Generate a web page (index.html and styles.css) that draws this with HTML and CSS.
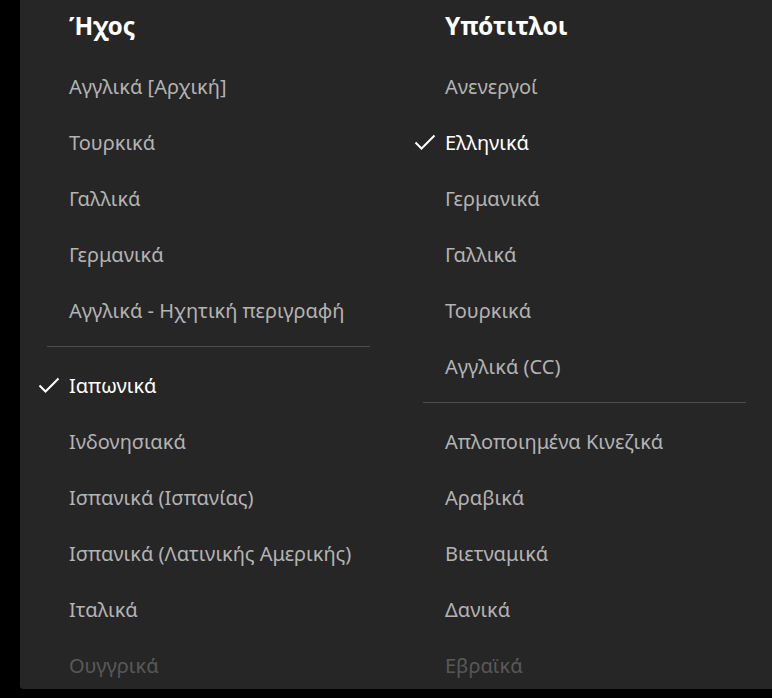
FILE: index.html
```html
<!DOCTYPE html>
<html lang="el">
<head>
<meta charset="utf-8">
<link rel="stylesheet" href="styles.css">
</head>
<body>
<div class="panel">
  <div class="column">
    <h2 class="heading">Ήχος</h2>
    <ul class="list">
      <li class="item">Αγγλικά [Αρχική]</li>
      <li class="item">Τουρκικά</li>
      <li class="item">Γαλλικά</li>
      <li class="item">Γερμανικά</li>
      <li class="item">Αγγλικά - Ηχητική περιγραφή</li>
    </ul>
    <hr class="divider">
    <ul class="list">
      <li class="item selected"><svg class="check" viewBox="0 0 22 16"><polyline points="1.5,8.5 7.5,14.5 20.5,1.5"/></svg>Ιαπωνικά</li>
      <li class="item">Ινδονησιακά</li>
      <li class="item">Ισπανικά (Ισπανίας)</li>
      <li class="item">Ισπανικά (Λατινικής Αμερικής)</li>
      <li class="item">Ιταλικά</li>
      <li class="item">Ουγγρικά</li>
    </ul>
  </div>
  <div class="column">
    <h2 class="heading">Υπότιτλοι</h2>
    <ul class="list">
      <li class="item">Ανενεργοί</li>
      <li class="item selected"><svg class="check" viewBox="0 0 22 16"><polyline points="1.5,8.5 7.5,14.5 20.5,1.5"/></svg>Ελληνικά</li>
      <li class="item">Γερμανικά</li>
      <li class="item">Γαλλικά</li>
      <li class="item">Τουρκικά</li>
      <li class="item">Αγγλικά (CC)</li>
    </ul>
    <hr class="divider">
    <ul class="list">
      <li class="item">Απλοποιημένα Κινεζικά</li>
      <li class="item">Αραβικά</li>
      <li class="item">Βιετναμικά</li>
      <li class="item">Δανικά</li>
      <li class="item">Εβραϊκά</li>
    </ul>
  </div>
  <div class="fade"></div>
</div>
</body>
</html>
```

FILE: styles.css
```css
html, body {
  margin: 0;
  padding: 0;
  background: #000;
  overflow: hidden;
}
body {
  font-family: "Noto Sans", "Open Sans", sans-serif;
  -webkit-font-smoothing: antialiased;
}
.panel {
  position: relative;
  margin-left: 20px;
  height: 689px;
  background: #262626;
  border-bottom-left-radius: 4px;
  overflow: hidden;
  display: flex;
  gap: 53px;
  padding-left: 27px;
}
.column {
  width: 323px;
  flex: none;
}
.heading {
  margin: 0 0 8px;
  height: 50px;
  line-height: 51px;
  padding-left: 22px;
  font-size: 24.5px;
  font-weight: 700;
  color: #fff;
  letter-spacing: -0.1px;
}
.list {
  list-style: none;
  margin: 0;
  padding: 0;
}
.item {
  position: relative;
  height: 56px;
  line-height: 58px;
  padding-left: 22px;
  font-size: 20px;
  color: #b3b3b3;
  white-space: nowrap;
}
.item.selected {
  color: #fff;
}
.check {
  position: absolute;
  left: -9px;
  top: 20px;
  width: 22px;
  height: 16px;
  fill: none;
  stroke: #fff;
  stroke-width: 2;
}
.divider {
  border: 0;
  height: 1px;
  background: #4d4d4d;
  margin: 8px 0 10px;
}
.fade {
  position: absolute;
  left: 0;
  right: 0;
  bottom: 0;
  height: 60px;
  background: linear-gradient(to bottom, rgba(38,38,38,0.55) 0%, rgba(38,38,38,0.7) 100%);
  pointer-events: none;
}
```
